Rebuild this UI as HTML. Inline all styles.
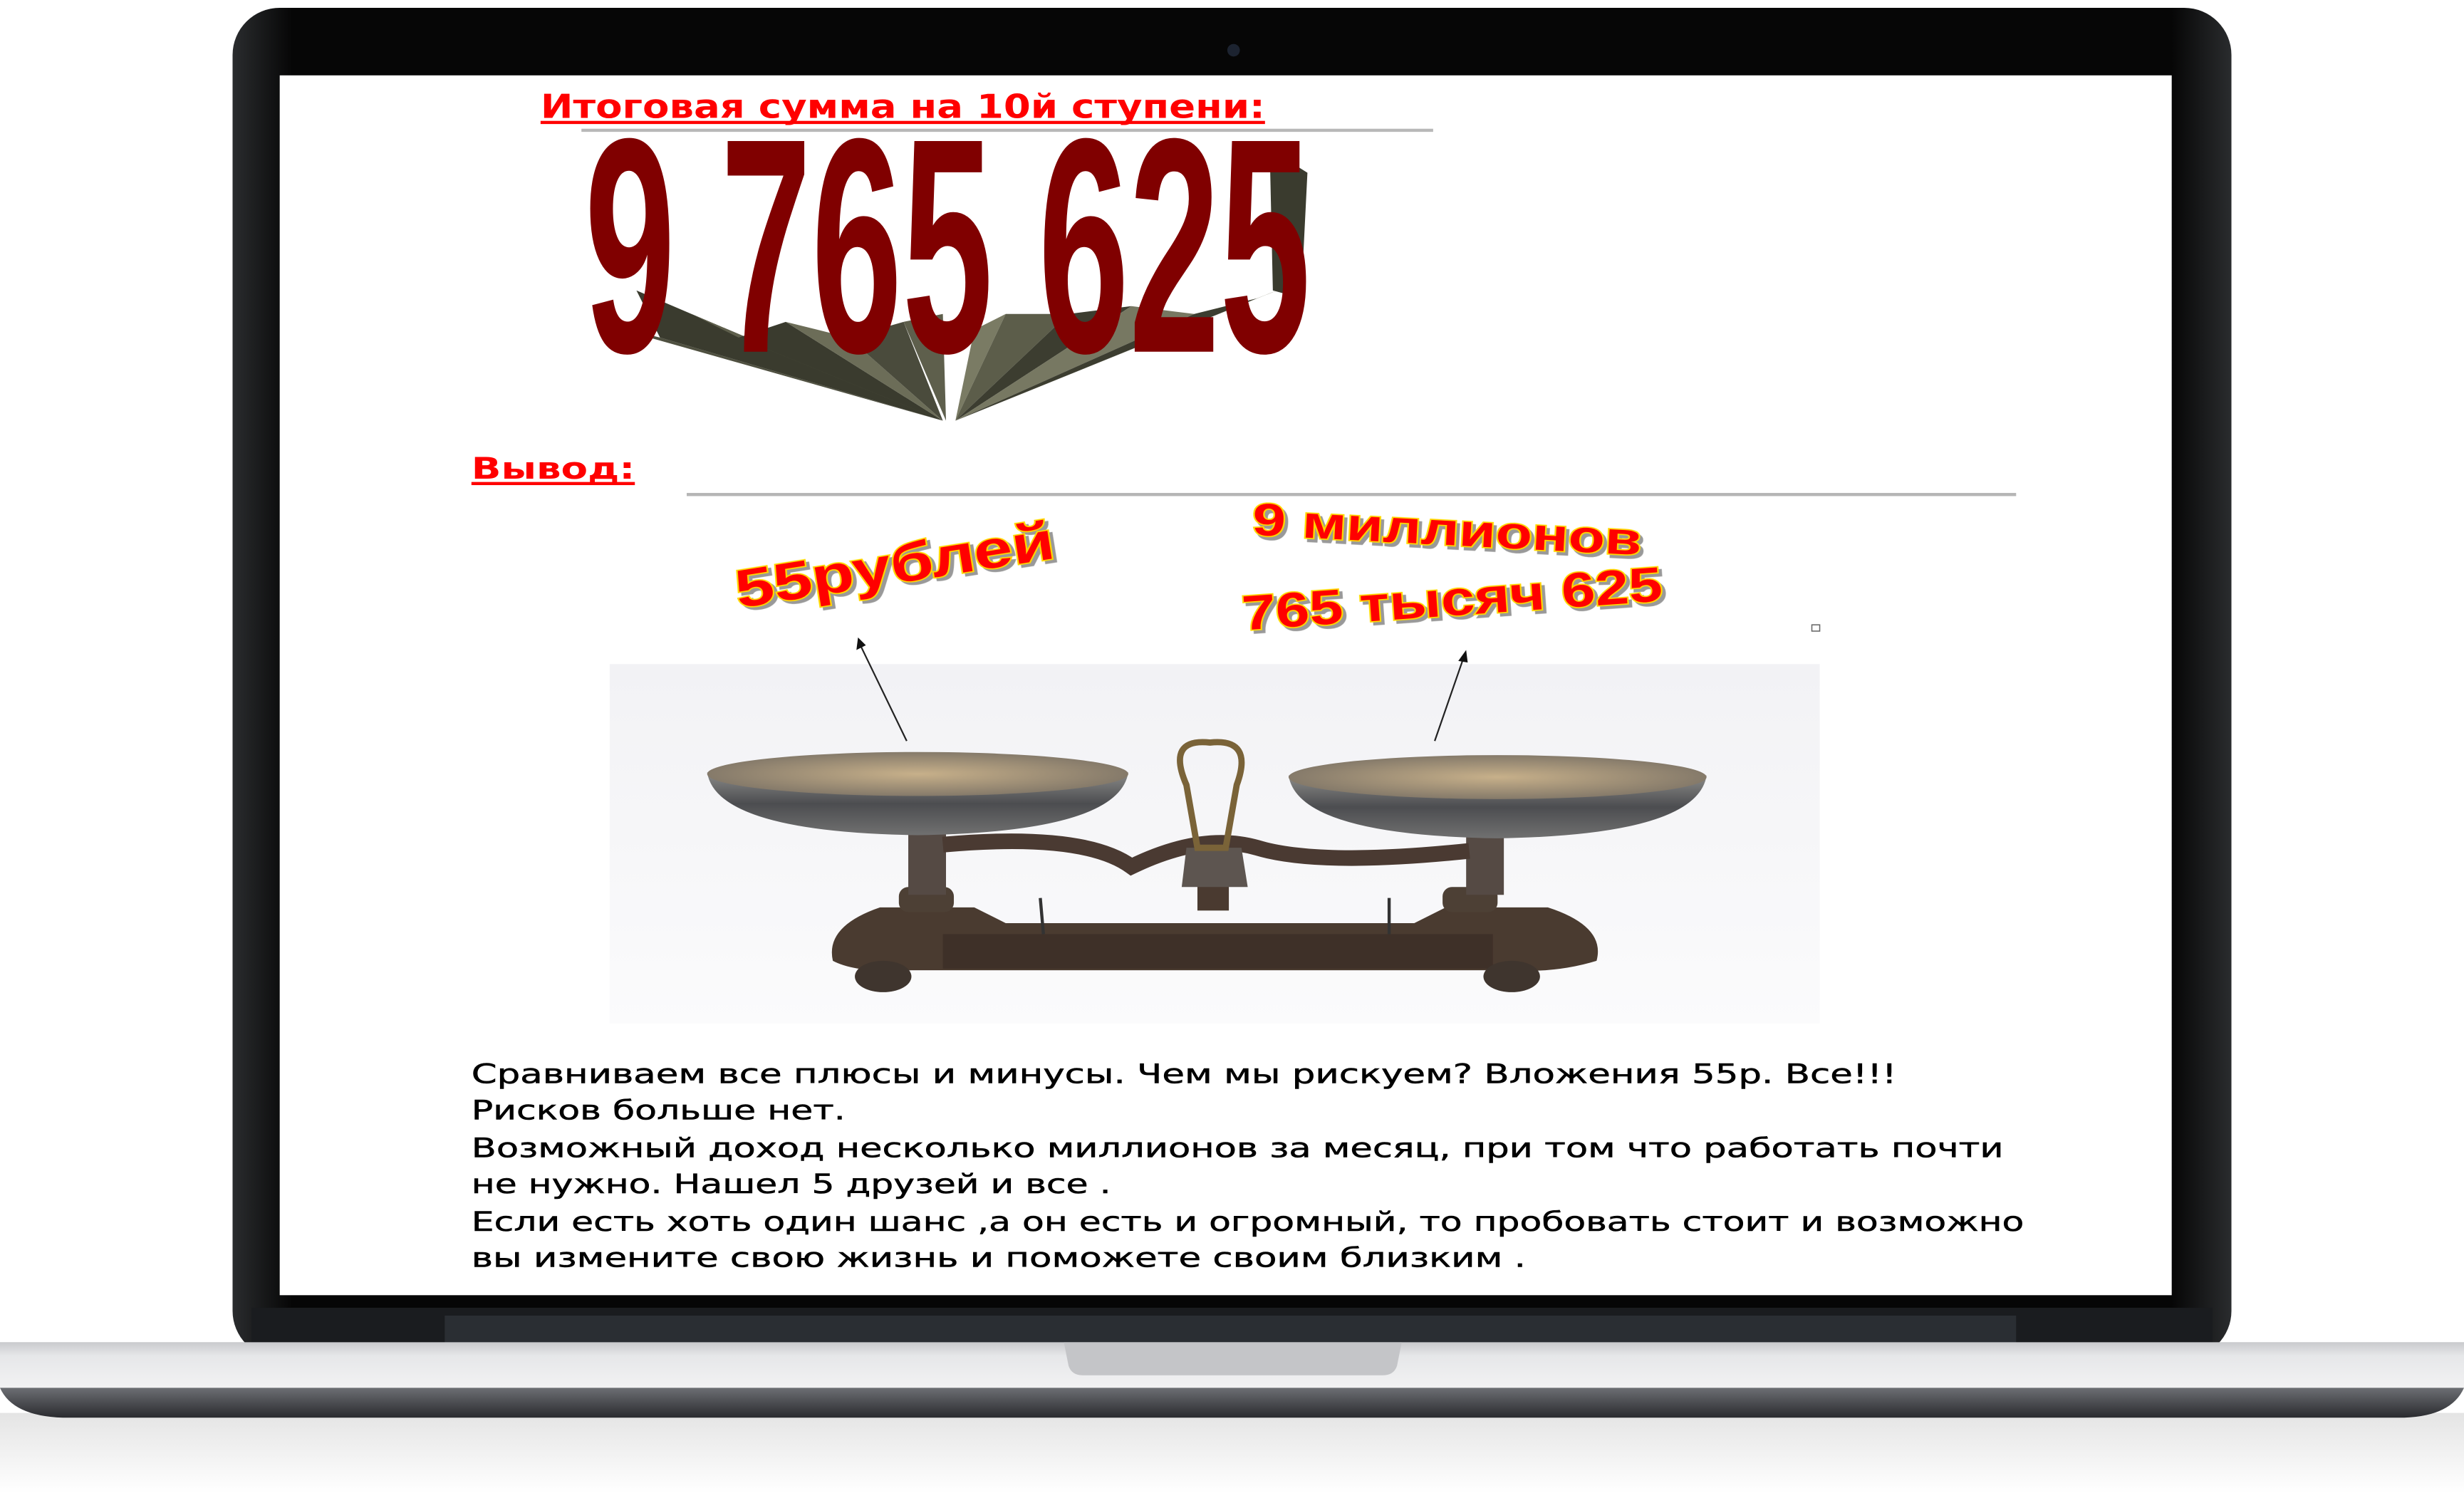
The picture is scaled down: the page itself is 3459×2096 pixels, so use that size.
<!DOCTYPE html>
<html><head><meta charset="utf-8"><style>
html,body{margin:0;padding:0;background:#fff;width:3459px;height:2096px;overflow:hidden}
svg{display:block}
</style></head><body>
<svg width="3459" height="2096" viewBox="0 0 1568 951" preserveAspectRatio="none" xmlns="http://www.w3.org/2000/svg">
<defs>
<linearGradient id="bz" x1="0" x2="1"><stop offset="0" stop-color="#2a2c2e"/><stop offset=".03" stop-color="#060606"/><stop offset=".97" stop-color="#060606"/><stop offset="1" stop-color="#2a2c2e"/></linearGradient>
<linearGradient id="top" x1="0" y1="0" x2="0" y2="1"><stop offset="0" stop-color="#c9cacd"/><stop offset=".3" stop-color="#e6e7e9"/><stop offset="1" stop-color="#f2f2f3"/></linearGradient>
<linearGradient id="front" x1="0" y1="0" x2="0" y2="1"><stop offset="0" stop-color="#a4a5a9"/><stop offset=".6" stop-color="#6d6f74"/><stop offset="1" stop-color="#2a2b2f"/></linearGradient>
<linearGradient id="refl" x1="0" y1="0" x2="0" y2="1"><stop offset="0" stop-color="#e4e4e4"/><stop offset="1" stop-color="#fff"/></linearGradient>
<linearGradient id="pan" x1="0" y1="0" x2="0" y2="1"><stop offset="0" stop-color="#8a8a88"/><stop offset=".5" stop-color="#4c4d50"/><stop offset="1" stop-color="#707070"/></linearGradient>
<radialGradient id="pin"><stop offset="0" stop-color="#c7b08a"/><stop offset="1" stop-color="#857a6a"/></radialGradient>
<linearGradient id="bg" x1="0" y1="0" x2="0" y2="1"><stop offset="0" stop-color="#f2f2f5"/><stop offset="1" stop-color="#fbfbfc"/></linearGradient>
</defs>
<rect x="0" y="900" width="1568" height="51" fill="url(#refl)"/>
<rect x="148" y="5" width="1272" height="860" rx="30" fill="url(#bz)"/>
<rect x="160" y="833" width="1248" height="25" fill="#1a1c1f"/>
<rect x="283" y="838" width="1000" height="20" fill="#2a2e33"/>
<circle cx="785" cy="32" r="4" fill="#1c2330"/>
<rect x="178" y="48" width="1204" height="777" fill="#fff"/>
<path d="M0,855 L1568,855 L1568,884 Q1560,902 1530,903 L40,903 Q8,902 0,884 Z" fill="url(#front)"/>
<rect x="0" y="855" width="1568" height="29" fill="url(#top)"/>
<path d="M677,855 L892,855 L889,870 Q887,876 880,876 L689,876 Q682,876 680,870 Z" fill="#c4c5c8"/>

<text x="344" y="75" font-family="DejaVu Sans, Liberation Sans, sans-serif" font-weight="bold" font-size="21" fill="#f00" textLength="461" lengthAdjust="spacingAndGlyphs">Итоговая сумма на 10й ступени:</text>
<rect x="344" y="77" width="461" height="2" fill="#f00"/>
<rect x="370" y="82" width="542" height="2" fill="#b8b8b8"/>

<!-- extrusion fan -->
<polygon points="378,205 420,215 600,268" fill="#4f5040"/>
<polygon points="405,185 440,200 600,268 420,215" fill="#3a3b2e"/>
<polygon points="440,200 470,215 600,268" fill="#5e5f4c"/>
<polygon points="470,215 500,205 600,268" fill="#3a3b2e"/>
<polygon points="500,205 540,215 600,268" fill="#6c6d58"/>
<polygon points="540,215 575,205 600,268" fill="#4a4b3c"/>
<polygon points="575,205 600,200 602,268" fill="#5e5f4c"/>
<polygon points="608,268 620,210 640,200" fill="#7a7b64"/>
<polygon points="608,268 640,200 680,200" fill="#5c5d4a"/>
<polygon points="608,268 680,200 720,195" fill="#3c3d30"/>
<polygon points="608,268 720,195 760,200" fill="#777862"/>
<polygon points="608,268 760,200 800,190" fill="#3c3d30"/>
<polygon points="608,268 800,190 825,180" fill="#777862"/>
<polygon points="808,95 832,110 828,190 810,185" fill="#3a3b2e"/>
<text x="0" y="0" font-family="Liberation Sans, sans-serif" font-weight="bold" font-size="100" fill="#800000" textLength="462" lengthAdjust="spacingAndGlyphs" transform="translate(372,224) scale(1,1.95)">9 765 625</text>

<text x="300" y="305" font-family="DejaVu Sans, Liberation Sans, sans-serif" font-weight="bold" font-size="19" fill="#f00" textLength="104" lengthAdjust="spacingAndGlyphs">Вывод:</text>
<rect x="300" y="307" width="104" height="2" fill="#f00"/>
<rect x="437" y="314" width="846" height="2" fill="#b5b5b5"/>

<g font-family="Liberation Sans, sans-serif" font-weight="bold" fill="#f00" stroke="#ffd800" stroke-width="1.6" paint-order="stroke">
<text x="466" y="372" font-size="34" transform="rotate(-9 566 355)" textLength="205" lengthAdjust="spacingAndGlyphs" style="filter:drop-shadow(2px 2px 0 #999)">55рублей</text>
<text x="797" y="347" font-size="29" transform="rotate(3 920 335)" textLength="248" lengthAdjust="spacingAndGlyphs" style="filter:drop-shadow(2px 2px 0 #999)">9 миллионов</text>
<text x="790" y="392" font-size="31" transform="rotate(-4 925 380)" textLength="268" lengthAdjust="spacingAndGlyphs" style="filter:drop-shadow(2px 2px 0 #999)">765 тысяч 625</text>
</g>
<rect x="1153" y="398" width="5" height="4" fill="none" stroke="#666" stroke-width=".7"/>

<rect x="388" y="423" width="770" height="229" fill="url(#bg)"/>
<path d="M530,612 Q525,590 560,578 L620,578 L640,588 L900,588 L920,578 L985,578 Q1022,590 1016,612 Q990,620 960,618 L580,618 Q545,620 530,612 Z" fill="#4a3b30"/>
<rect x="600" y="595" width="350" height="22" fill="#3e3028"/>
<ellipse cx="562" cy="622" rx="18" ry="10" fill="#3f352e"/>
<ellipse cx="962" cy="622" rx="18" ry="10" fill="#3f352e"/>
<rect x="572" y="565" width="35" height="16" rx="6" fill="#4d4035"/>
<rect x="918" y="565" width="35" height="16" rx="6" fill="#4d4035"/>
<rect x="578" y="525" width="24" height="45" fill="#554a44"/>
<rect x="933" y="525" width="24" height="45" fill="#554a44"/>
<rect x="762" y="548" width="20" height="32" fill="#4a3a30"/>
<path d="M600,538 Q690,530 720,552 Q765,530 800,540 Q840,552 935,542" stroke="#4a3a32" stroke-width="10" fill="none"/>
<path d="M755,540 L790,540 L794,565 L752,565 Z" fill="#5d5550"/>
<path d="M755,500 Q742,470 770,473 Q798,470 787,500 L780,540 L762,540 Z" stroke="#7a6338" stroke-width="4" fill="none"/>
<line x1="662" y1="572" x2="664" y2="595" stroke="#333" stroke-width="2"/>
<line x1="884" y1="572" x2="884" y2="595" stroke="#333" stroke-width="2"/>
<path d="M450,492 Q456,530 584,532 Q712,530 718,492 Z" fill="url(#pan)"/>
<ellipse cx="584" cy="493" rx="134" ry="14" fill="url(#pin)"/>
<path d="M820,494 Q826,532 953,534 Q1080,532 1086,494 Z" fill="url(#pan)"/>
<ellipse cx="953" cy="495" rx="133" ry="14" fill="url(#pin)"/>
<line x1="577" y1="472" x2="548" y2="412" stroke="#222" stroke-width="1"/>
<polygon points="546,406 545,414 551,411" fill="#111"/>
<line x1="913" y1="472" x2="931" y2="420" stroke="#222" stroke-width="1"/>
<polygon points="933,414 928,421 934,422" fill="#111"/>

<g font-family="DejaVu Sans, Liberation Sans, sans-serif" font-size="17" fill="#000" stroke="#000" stroke-width="0.25">
<text x="300" y="690" textLength="907" lengthAdjust="spacingAndGlyphs">Сравниваем все плюсы и минусы. Чем мы рискуем? Вложения 55р. Все!!!</text>
<text x="300" y="713" textLength="238" lengthAdjust="spacingAndGlyphs">Рисков больше нет.</text>
<text x="300" y="737" textLength="975" lengthAdjust="spacingAndGlyphs">Возможный доход несколько миллионов за месяц, при том что работать почти</text>
<text x="300" y="760" textLength="407" lengthAdjust="spacingAndGlyphs">не нужно. Нашел 5 друзей и все .</text>
<text x="300" y="784" textLength="988" lengthAdjust="spacingAndGlyphs">Если есть хоть один шанс ,а он есть и огромный, то пробовать стоит и возможно</text>
<text x="300" y="807" textLength="671" lengthAdjust="spacingAndGlyphs">вы измените свою жизнь и поможете своим близким .</text>
</g>
</svg>
</body></html>
